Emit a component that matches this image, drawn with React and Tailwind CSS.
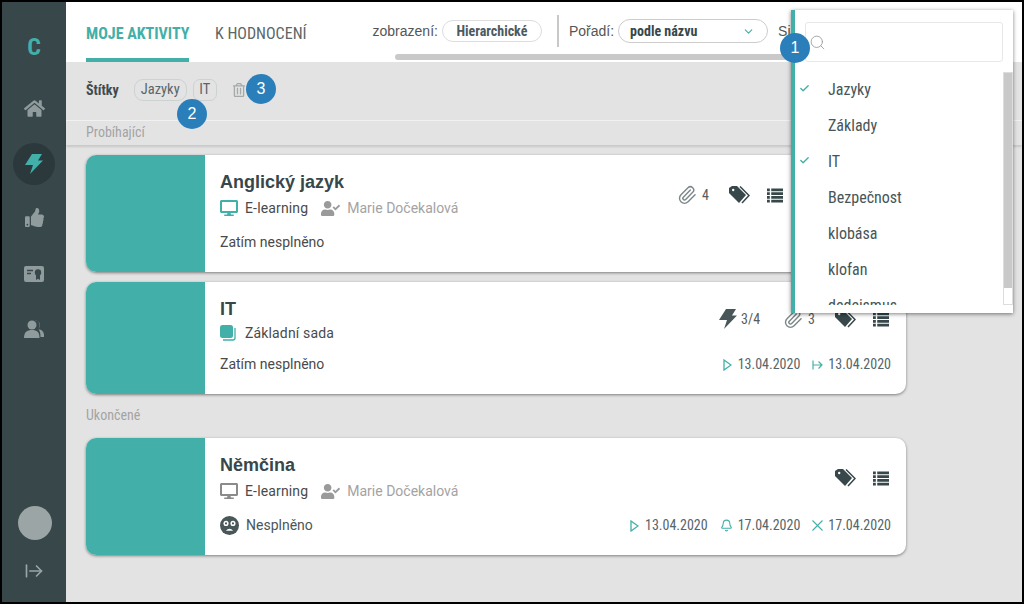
import { Check, ChevronDown, Search, Bell, ArrowRightFromLine, Paperclip } from "lucide-react";
import { FaHome, FaThumbsUp, FaUserCheck, FaDesktop, FaRegTrashAlt } from "react-icons/fa";

const cond = "font-['Roboto_Condensed','Roboto',sans-serif] [font-stretch:75%]";

function Badge({ n, className }) {
  return (
    <div className={"absolute w-[30px] h-[30px] rounded-full bg-[#2a7fba] text-white text-[16px] flex items-center justify-center font-['Liberation_Sans',sans-serif] " + className}>
      {n}
    </div>
  );
}

function Play() {
  return (
    <svg className="mr-[1px]" width="9" height="12" viewBox="0 0 9 12" fill="none" stroke="#42b0a8" strokeWidth="1.3">
      <path d="M1 1 L8 6 L1 11 Z" />
    </svg>
  );
}

function Arrow() {
  return (
    <svg width="11" height="10" viewBox="0 0 11 10" fill="none" stroke="#42b0a8" strokeWidth="1.2">
      <path d="M1 0.5 V9.5 M1 5 H10 M6.5 1.5 L10 5 L6.5 8.5" />
    </svg>
  );
}

function Cross() {
  return (
    <svg width="11" height="11" viewBox="0 0 11 11" fill="none" stroke="#42b0a8" strokeWidth="1.1">
      <path d="M0.5 0.5 L10.5 10.5 M10.5 0.5 L0.5 10.5" />
    </svg>
  );
}

function Bolt({ color, w, h }) {
  return (
    <svg width={w} height={h} viewBox="0 0 18 20" fill={color}>
      <path d="M7 0 H17 L13 6.5 H18 L5 20 L8 11 H0 Z" />
    </svg>
  );
}

function Certificate() {
  return (
    <svg width="20" height="16" viewBox="0 0 20 16">
      <rect width="20" height="16" rx="2" fill="#8f9b9d" />
      <path d="M3 4.5 H9 M3 7.5 H7" stroke="#37474a" strokeWidth="1.3" />
      <circle cx="14" cy="6.5" r="3.2" fill="#37474a" />
      <path d="M12 8 V14 L14 12.8 L16 14 V8 Z" fill="#37474a" />
    </svg>
  );
}

function Users() {
  return (
    <svg width="20" height="18" viewBox="0 0 20 18" fill="#8f9b9d">
      <path d="M11 0.5 A4.5 4.5 0 0 1 14 8.5 A4 4 0 0 0 12.5 1 Z" />
      <path d="M14.5 9.5 C17.5 9.5 20 11.5 20 15 V17 H16.5 C16.5 13.5 16 11 14.5 9.5 Z" />
      <circle cx="8" cy="5" r="4.5" />
      <path d="M0 18 C0 12 3 10 8 10 C13 10 15.5 12 15.5 18 Z" />
    </svg>
  );
}

function Stack() {
  return (
    <svg className="mr-[2px]" width="16" height="16" viewBox="0 0 16 16">
      <rect x="0" y="0" width="13" height="13" rx="2.5" fill="#42b0a8" />
      <path d="M15 3 V13 A2 2 0 0 1 13 15 H3" fill="none" stroke="#42b0a8" strokeWidth="1.3" />
    </svg>
  );
}

function Face() {
  return (
    <svg width="19" height="19" viewBox="0 0 18 18">
      <circle cx="9" cy="9" r="9" fill="#4a5759" />
      <circle cx="5.7" cy="7" r="2.4" fill="#fff" />
      <circle cx="12.3" cy="7" r="2.4" fill="#fff" />
      <circle cx="5.7" cy="7" r="1" fill="#4a5759" />
      <circle cx="12.3" cy="7" r="1" fill="#4a5759" />
      <path d="M5.5 14 Q9 10 12.5 14 Z" fill="#fff" />
    </svg>
  );
}

function Tags() {
  return (
    <svg width="21" height="18" viewBox="0 0 21 18">
      <path d="M0 2 L3 0 H8 L17 9 L10 17 L0 7 Z" fill="#37474a" fillRule="evenodd" />
      <circle cx="4.2" cy="4" r="1.2" fill="#fff" />
      <path d="M11 0.5 L20 9.5 L13 17" fill="none" stroke="#37474a" strokeWidth="1.5" />
    </svg>
  );
}

function ListBars() {
  return (
    <svg width="16" height="15" viewBox="0 0 17 15" fill="#37474a">
      <path d="M0 0 H3 V3 H0 Z M4.5 0 H17 V3 H4.5 Z M0 4 H3 V7 H0 Z M4.5 4 H17 V7 H4.5 Z M0 8 H3 V11 H0 Z M4.5 8 H17 V11 H4.5 Z M0 12 H3 V15 H0 Z M4.5 12 H17 V15 H4.5 Z" />
    </svg>
  );
}

function Clip({ n }) {
  return (
    <span className="flex items-center gap-[5px]">
      <Paperclip size={20} color="#7d8789" strokeWidth={1.7} />
      <span className={cond + " text-[14px] text-[#5b5b5b]"}>{n}</span>
    </span>
  );
}

function DateItem({ icon, date }) {
  return (
    <span className="flex items-center gap-[5px]">
      {icon}
      <span className={cond + " text-[14px] text-[#56656a]"}>{date}</span>
    </span>
  );
}

function Card({ height, title, meta, status, icons, dates, rightClass }) {
  return (
    <div className="flex bg-white rounded-[10px] overflow-hidden shadow-[0_1px_3px_rgba(0,0,0,0.45)] w-[820px]" style={{ height }}>
      <div className="w-[119px] bg-[#42b0a8] shrink-0" />
      <div className="flex-1 px-[15px] flex flex-col">
        <div className="flex justify-between">
          <div>{title}{meta}</div>
          <div className={"flex items-center " + rightClass}>{icons}</div>
        </div>
        <div className="flex justify-between items-center mt-auto mb-[19px]">
          {status}
          <div className="flex items-center gap-[12px]">{dates}</div>
        </div>
      </div>
    </div>
  );
}

function Title({ children }) {
  return <div className="font-['Liberation_Sans',sans-serif] font-bold text-[18px] leading-[22px] text-[#37474a] mt-[16px]">{children}</div>;
}

function Meta({ icon, label, teacher, className = "mt-[5px]" }) {
  return (
    <div className={"flex items-center h-[20px] text-[14px] font-['Roboto',sans-serif] " + className}>
      {icon}
      <span className="ml-[7px] tracking-[0.15px] text-[#4a4a4a]">{label}</span>
      {teacher && <FaUserCheck size={19} color="#9a9a9a" className="ml-[13px]" />}
      {teacher && <span className="ml-[7px] text-[#a3a3a3]">{teacher}</span>}
    </div>
  );
}

export default function App() {
  return (
    <div className="relative w-[1024px] h-[604px] border-2 border-black flex overflow-hidden font-['Roboto',sans-serif] bg-[#e3e3e3]">
      <aside className="w-[64px] shrink-0 bg-[#37474a] flex flex-col items-center">
        <div className={cond + " font-bold text-[24px] text-[#42b0a8] mt-[32px] leading-[26px]"}>C</div>
        <FaHome size={21} color="#8f9b9d" className="mt-[38px]" />
        <div className="w-[42px] h-[42px] rounded-full bg-[#2c393c] flex items-center justify-center mt-[24px]">
          <Bolt color="#42b0a8" w={18} h={20} />
        </div>
        <FaThumbsUp size={19} color="#8f9b9d" className="mt-[23px]" />
        <div className="mt-[39px] flex"><Certificate /></div>
        <div className="mt-[38px] flex"><Users /></div>
        <div className="w-[34px] h-[34px] rounded-full bg-[#9ca5a6] mt-auto ml-[2px]" />
        <ArrowRightFromLine size={20} color="#9aa5a7" className="mt-[21px] mb-[21px]" />
      </aside>

      <main className="flex-1 flex flex-col min-w-0">
        <header className="relative h-[60px] shrink-0 bg-white flex pl-[20px]">
          <div className="flex gap-[26px]">
            <div className={cond + " h-[60px] border-b-4 border-[#42b0a8] w-[103px] font-bold text-[16px] text-[#42b0a8] pt-[20px] whitespace-nowrap"}>MOJE AKTIVITY</div>
            <div className={cond + " text-[16px] text-[#5b6668] pt-[20px] whitespace-nowrap"}>K HODNOCENÍ</div>
          </div>
          <div className="flex items-center ml-[66px] h-[60px] pb-[2px] text-[14px] text-[#555] font-['Liberation_Sans',sans-serif]">
            <span>zobrazení:</span>
            <div className={cond + " ml-[4px] w-[100px] h-[22px] rounded-full border border-[#ddd] flex items-center justify-center font-bold text-[14px] text-[#4c5a60]"}>Hierarchické</div>
            <div className="w-[2px] h-[32px] bg-[#c8c8c8] ml-[15px] mr-[10px]" />
            <span>Pořadí:</span>
            <div className={cond + " ml-[4px] w-[150px] h-[24px] rounded-full border border-[#ccc] flex items-center justify-between pl-[11px] pr-[12px] font-bold text-[14px] text-[#37474a]"}>
              podle názvu
              <ChevronDown size={13} color="#42b0a8" />
            </div>
            <span className="ml-[10px]">Si</span>
          </div>
          <div className="absolute left-[329px] top-[52px] w-[420px] h-[6px] rounded-full bg-[#c9c9c9]" />
        </header>

        <div className="h-[59px] shrink-0 border-b border-[#f1f1f1] flex items-center pl-[20px] pb-[2px]">
          <span className={cond + " font-bold text-[14px] text-[#3f4b4e]"}>Štítky</span>
          <span className={cond + " ml-[15px] h-[22px] w-[53px] justify-center rounded-[9px] border border-[#ccd2d2] flex items-center text-[14.5px] text-[#5b6668]"}>Jazyky</span>
          <span className={cond + " ml-[6px] h-[22px] w-[24px] justify-center rounded-[7px] border border-[#ccd2d2] flex items-center text-[14.5px] text-[#5b6668]"}>IT</span>
          <FaRegTrashAlt size={14} color="#a5a9aa" className="ml-[15px]" />
        </div>

        <div className={cond + " h-[24px] shrink-0 pl-[20px] pt-[1px] text-[14px] text-[#a3a3a3] shadow-[0_2px_2px_rgba(0,0,0,0.12)]"}>Probíhající</div>

        <div className="flex-1 pl-[20px] pt-[10px] flex flex-col">
          <Card
            height={117}
            title={<Title>Anglický jazyk</Title>}
            meta={<Meta icon={<FaDesktop size={18} color="#42b0a8" />} label="E-learning" teacher="Marie Dočekalová" />}
            status={<span className="text-[14px] text-[#4a4a4a]">Zatím nesplněno</span>}
            rightClass="mr-[108px] mb-[-8px] mt-[9px]"
            icons={<>
              <Clip n="4" />
              <span className="ml-[20px] flex"><Tags /></span>
              <span className="ml-[17px] flex"><ListBars /></span>
            </>}
          />
          <div className="h-[10px] shrink-0" />
          <Card
            height={112}
            title={<Title>IT</Title>}
            meta={<Meta className="mt-[3px]" icon={<Stack />} label="Základní sada" />}
            status={<span className="text-[14px] text-[#4a4a4a]">Zatím nesplněno</span>}
            rightClass="mr-[2px] mt-[7px] mb-[-6px]"
            icons={<>
              <Bolt color="#4a5759" w={18} h={20} />
              <span className={cond + " ml-[4px] text-[14px] text-[#5b5b5b]"}>3/4</span>
              <span className="ml-[23px] flex"><Clip n="3" /></span>
              <span className="ml-[20px] flex"><Tags /></span>
              <span className="ml-[17px] flex"><ListBars /></span>
            </>}
            dates={<>
              <DateItem icon={<Play />} date="13.04.2020" />
              <DateItem icon={<Arrow />} date="13.04.2020" />
            </>}
          />
          <div className={cond + " h-[44px] pt-[11px] text-[14px] text-[#a3a3a3]"}>Ukončené</div>
          <Card
            height={117}
            title={<Title>Němčina</Title>}
            meta={<Meta icon={<FaDesktop size={18} color="#8b8b8b" />} label="E-learning" teacher="Marie Dočekalová" />}
            status={<span className="flex items-center gap-[7px] text-[14px] text-[#4a5759]"><Face />Nesplněno</span>}
            rightClass="mr-[2px] mt-[9px] mb-[-8px]"
            icons={<>
              <span className="flex"><Tags /></span>
              <span className="ml-[17px] flex"><ListBars /></span>
            </>}
            dates={<>
              <DateItem icon={<Play />} date="13.04.2020" />
              <DateItem icon={<Bell size={13} color="#42b0a8" />} date="17.04.2020" />
              <DateItem icon={<Cross />} date="17.04.2020" />
            </>}
          />
        </div>
      </main>

      <div className="absolute left-[789px] top-[8px] w-[222px] h-[303px] bg-white border-l-4 border-[#42b0a8] shadow-[0_1px_4px_rgba(0,0,0,0.5)]">
        <div className="absolute left-[10px] top-[12px] w-[198px] h-[40px] border border-[#e8e8e8] rounded-[3px] flex items-center pl-[3px]">
          <Search size={17} color="#999" strokeWidth={1.2} />
        </div>
        <div className="absolute left-0 top-[62px] w-[208px] h-[233px] overflow-hidden">
          {[
            ["Jazyky", true],
            ["Základy", false],
            ["IT", true],
            ["Bezpečnost", false],
            ["klobása", false],
            ["klofan", false],
            ["dedeismus", false],
          ].map(([name, on]) => (
            <div key={name} className="h-[36px] flex items-center relative pl-[33px]">
              {on && <Check size={11} color="#42b0a8" strokeWidth={3} className="absolute left-[4px] top-[11px]" />}
              <span className={cond + " text-[16px] text-[#475558]"}>{name}</span>
            </div>
          ))}
        </div>
        <div className="absolute right-0 top-[62px] w-[10px] h-[233px] border border-[#ddd]">
          <div className="h-[215px] bg-[#c9c9c9]" />
        </div>
      </div>

      <Badge n="1" className="left-[778px] top-[31px]" />
      <Badge n="2" className="left-[175px] top-[97px]" />
      <Badge n="3" className="left-[244px] top-[72px]" />
    </div>
  );
}
